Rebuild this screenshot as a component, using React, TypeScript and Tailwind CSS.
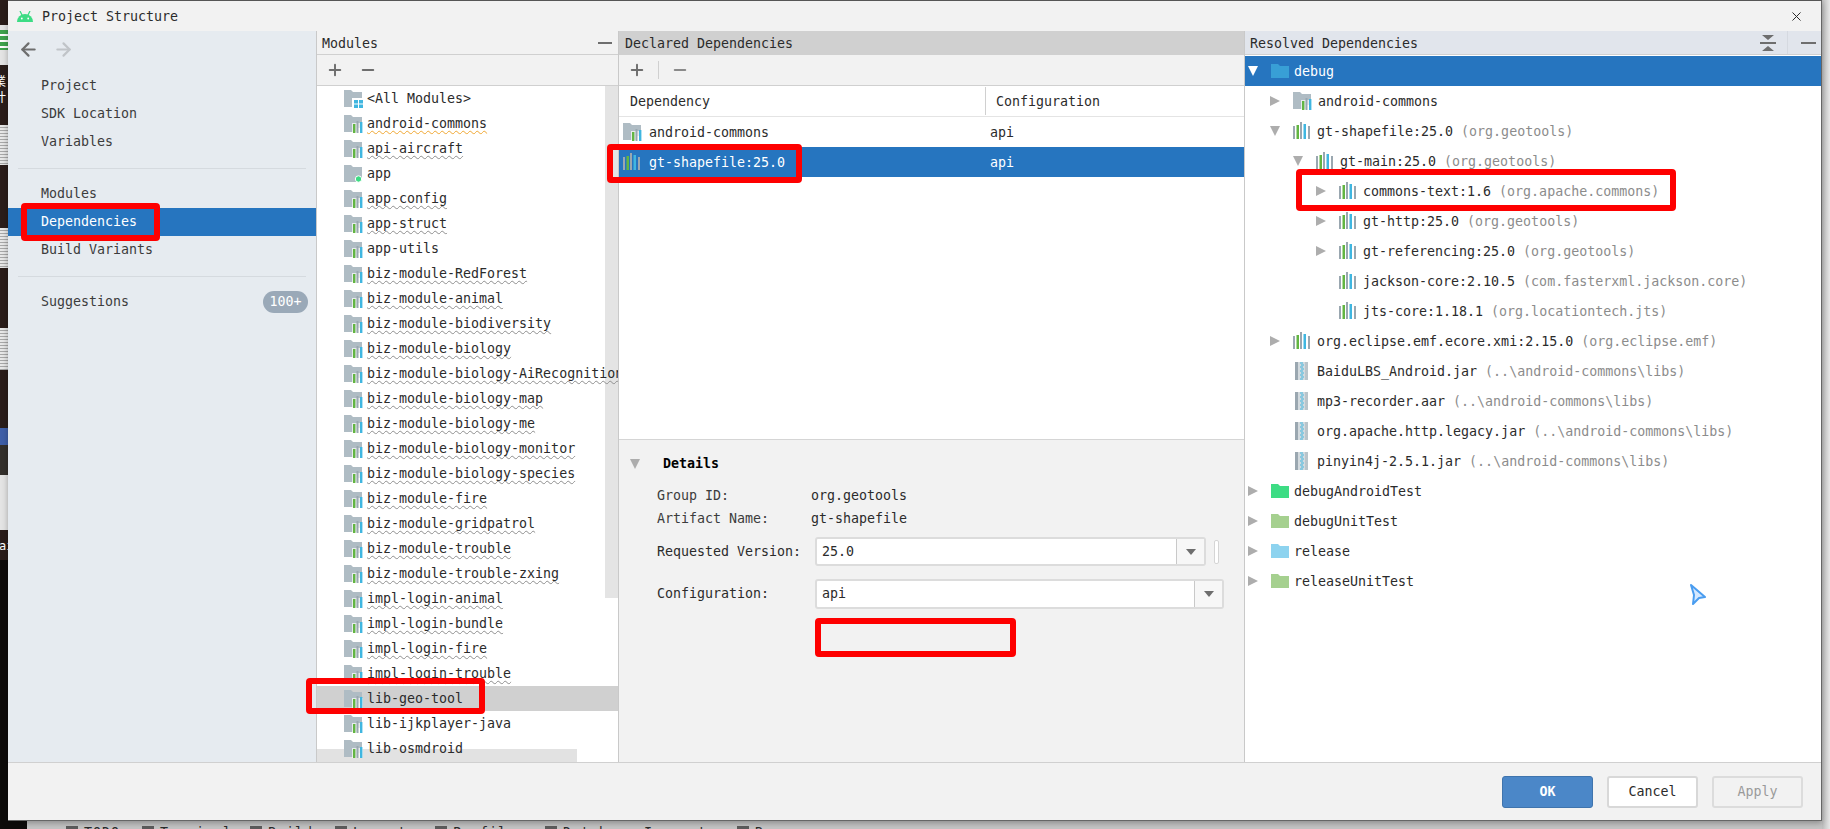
import { ArrowLeft, ArrowRight, Plus, Minus, X } from 'lucide-react';

type IconKind = 'module' | 'lib' | 'jar' | 'app' | 'all';

interface TreeRow {
  level: number;
  arrow?: 'right' | 'down';
  icon: IconKind | 'debug' | 'green' | 'lime' | 'sky';
  name: string;
  detail?: string;
  selected?: boolean;
}

const modules: { name: string; icon: IconKind; line?: 'orange' | 'gray' }[] = [
  { name: '<All Modules>', icon: 'all' },
  { name: 'android-commons', icon: 'module', line: 'orange' },
  { name: 'api-aircraft', icon: 'module', line: 'gray' },
  { name: 'app', icon: 'app' },
  { name: 'app-config', icon: 'module', line: 'gray' },
  { name: 'app-struct', icon: 'module', line: 'gray' },
  { name: 'app-utils', icon: 'module' },
  { name: 'biz-module-RedForest', icon: 'module', line: 'gray' },
  { name: 'biz-module-animal', icon: 'module', line: 'gray' },
  { name: 'biz-module-biodiversity', icon: 'module', line: 'gray' },
  { name: 'biz-module-biology', icon: 'module', line: 'gray' },
  { name: 'biz-module-biology-AiRecognition', icon: 'module', line: 'gray' },
  { name: 'biz-module-biology-map', icon: 'module', line: 'gray' },
  { name: 'biz-module-biology-me', icon: 'module', line: 'gray' },
  { name: 'biz-module-biology-monitor', icon: 'module', line: 'gray' },
  { name: 'biz-module-biology-species', icon: 'module', line: 'gray' },
  { name: 'biz-module-fire', icon: 'module', line: 'gray' },
  { name: 'biz-module-gridpatrol', icon: 'module', line: 'gray' },
  { name: 'biz-module-trouble', icon: 'module', line: 'gray' },
  { name: 'biz-module-trouble-zxing', icon: 'module', line: 'gray' },
  { name: 'impl-login-animal', icon: 'module', line: 'gray' },
  { name: 'impl-login-bundle', icon: 'module', line: 'gray' },
  { name: 'impl-login-fire', icon: 'module', line: 'gray' },
  { name: 'impl-login-trouble', icon: 'module', line: 'gray' },
  { name: 'lib-geo-tool', icon: 'module' },
  { name: 'lib-ijkplayer-java', icon: 'module' },
  { name: 'lib-osmdroid', icon: 'module' },
];

const tree: TreeRow[] = [
  { level: 0, arrow: 'down', icon: 'debug', name: 'debug', selected: true },
  { level: 1, arrow: 'right', icon: 'module', name: 'android-commons' },
  { level: 1, arrow: 'down', icon: 'lib', name: 'gt-shapefile:25.0', detail: '(org.geotools)' },
  { level: 2, arrow: 'down', icon: 'lib', name: 'gt-main:25.0', detail: '(org.geotools)' },
  { level: 3, arrow: 'right', icon: 'lib', name: 'commons-text:1.6', detail: '(org.apache.commons)' },
  { level: 3, arrow: 'right', icon: 'lib', name: 'gt-http:25.0', detail: '(org.geotools)' },
  { level: 3, arrow: 'right', icon: 'lib', name: 'gt-referencing:25.0', detail: '(org.geotools)' },
  { level: 3, icon: 'lib', name: 'jackson-core:2.10.5', detail: '(com.fasterxml.jackson.core)' },
  { level: 3, icon: 'lib', name: 'jts-core:1.18.1', detail: '(org.locationtech.jts)' },
  { level: 1, arrow: 'right', icon: 'lib', name: 'org.eclipse.emf.ecore.xmi:2.15.0', detail: '(org.eclipse.emf)' },
  { level: 1, icon: 'jar', name: 'BaiduLBS_Android.jar', detail: '(..\\android-commons\\libs)' },
  { level: 1, icon: 'jar', name: 'mp3-recorder.aar', detail: '(..\\android-commons\\libs)' },
  { level: 1, icon: 'jar', name: 'org.apache.http.legacy.jar', detail: '(..\\android-commons\\libs)' },
  { level: 1, icon: 'jar', name: 'pinyin4j-2.5.1.jar', detail: '(..\\android-commons\\libs)' },
  { level: 0, arrow: 'right', icon: 'green', name: 'debugAndroidTest' },
  { level: 0, arrow: 'right', icon: 'lime', name: 'debugUnitTest' },
  { level: 0, arrow: 'right', icon: 'sky', name: 'release' },
  { level: 0, arrow: 'right', icon: 'lime', name: 'releaseUnitTest' },
];

const levelPad = ['pl-[3px]', 'pl-[25px]', 'pl-[48px]', 'pl-[71px]'];

function Bars({ dim }: { dim?: boolean }) {
  return (
    <svg width="18" height="18" viewBox="0 0 18 18" className={dim ? 'shrink-0 opacity-80' : 'shrink-0'}>
      <rect x="0" y="4" width="2" height="13" fill="#9aa7b0" />
      <rect x="3.5" y="3" width="2.5" height="14" fill="#62b543" />
      <rect x="7" y="0" width="2" height="17" fill="#9aa7b0" />
      <rect x="10.5" y="2" width="2.5" height="15" fill="#40b6e0" />
      <rect x="15" y="4" width="2" height="13" fill="#9aa7b0" />
    </svg>
  );
}

function Folder({ color }: { color: string }) {
  return (
    <svg width="18" height="18" viewBox="0 0 18 18" className="shrink-0">
      <path d="M0 2h7l2 2h9v12H0z" fill={color} />
    </svg>
  );
}

function ModuleIcon({ kind }: { kind: IconKind }) {
  return (
    <svg width="19" height="18" viewBox="0 0 19 18" className="shrink-0">
      <path d="M0 0h7l2 2h9v11h-5v4H0z" fill="#afbcc4" />
      {kind === 'module' && (
        <>
          <rect x="8" y="8" width="11" height="10" fill="#fff" opacity="0.7" />
          <rect x="9" y="9" width="2.4" height="9" fill="#62b543" />
          <rect x="12.5" y="6" width="2" height="12" fill="#9aa7b0" />
          <rect x="16" y="7" width="2.4" height="11" fill="#40b6e0" />
        </>
      )}
      {kind === 'app' && <circle cx="14.5" cy="14" r="3.2" fill="#3ddc84" stroke="#fff" />}
      {kind === 'all' && (
        <>
          <rect x="8" y="8" width="11" height="10" fill="#fff" />
          <rect x="10" y="10" width="4" height="3.5" fill="#40b6e0" />
          <rect x="15" y="10" width="4" height="3.5" fill="#40b6e0" />
          <rect x="10" y="14.5" width="4" height="3.5" fill="#40b6e0" />
          <rect x="15" y="14.5" width="4" height="3.5" fill="#40b6e0" />
        </>
      )}
    </svg>
  );
}

function JarIcon() {
  return (
    <svg width="18" height="20" viewBox="0 0 18 20" className="shrink-0">
      <rect x="2" y="1" width="13" height="18" fill="#d3dade" />
      <rect x="2" y="1" width="3" height="18" fill="#9aa7b0" />
      <rect x="12" y="1" width="3" height="18" fill="#b9c4ca" />
      <path d="M7 2h3M8 4h3M7 6h3M8 8h3M7 10h3M8 12h3M7 14h3M8 16h3M7 18h3" stroke="#40b6e0" strokeWidth="1.2" />
    </svg>
  );
}

function Triangle({ dir, color = '#adadad' }: { dir: 'right' | 'down'; color?: string }) {
  return (
    <svg width="10" height="10" viewBox="0 0 10 10" className="shrink-0">
      <path d={dir === 'right' ? 'M0 0l10 5-10 5z' : 'M0 0h10l-5 10z'} fill={color} />
    </svg>
  );
}

function RedBox({ className }: { className: string }) {
  return <div className={`absolute z-20 border-[6px] border-[#fe0000] rounded-[4px] ${className}`} />;
}

function NavRow({ label, selected }: { label: string; selected?: boolean }) {
  return (
    <div className={`h-[28px] pl-[33px] flex items-center ${selected ? 'bg-[#2675bf] text-white' : 'text-[#3c3c3c]'}`}>
      {label}
    </div>
  );
}

function Sidebar() {
  return (
    <div className="w-[309px] shrink-0 bg-[#e6ebf0] border-r border-[#c9c9c9]">
      <div className="h-[36px] flex items-center pl-[10px] gap-[14px]">
        <ArrowLeft size={21} strokeWidth={2.5} color="#6e6e6e" />
        <ArrowRight size={21} strokeWidth={2.5} color="#c0c4c8" />
      </div>
      <div className="mt-[5px]">
        <NavRow label="Project" />
        <NavRow label="SDK Location" />
        <NavRow label="Variables" />
      </div>
      <div className="mt-[12px] mb-[11px] mx-[10px] h-px bg-[#d5dadf]" />
      <NavRow label="Modules" />
      <NavRow label="Dependencies" selected />
      <NavRow label="Build Variants" />
      <div className="mt-[12px] mb-[11px] mx-[10px] h-px bg-[#d5dadf]" />
      <div className="h-[28px] pl-[33px] pr-[8px] flex items-center justify-between text-[#3c3c3c]">
        <span>Suggestions</span>
        <span className="w-[45px] h-[22px] rounded-full bg-[#9aa9b8] text-white text-center leading-[22px]">100+</span>
      </div>
    </div>
  );
}

function ModulesPanel() {
  return (
    <div className="w-[301px] shrink-0 flex flex-col bg-white">
      <div className="h-[24px] shrink-0 bg-[#f2f2f2] border-b border-[#d0d0d0] pl-[5px] pr-[6px] flex items-center justify-between">
        <span className="pt-[2px]">Modules</span>
        <div className="w-[14px] h-[2px] bg-[#6e6e6e]" />
      </div>
      <div className="h-[31px] shrink-0 bg-[#f2f2f2] border-b border-[#d0d0d0] pl-[9px] flex items-center gap-[15px]">
        <Plus size={18} strokeWidth={2.6} color="#6e6e6e" />
        <Minus size={18} strokeWidth={2.6} color="#6e6e6e" />
      </div>
      <div className="relative flex-1 overflow-hidden">
        <div className="absolute right-0 top-0 w-[13px] h-[512px] bg-[#e4e4e4]" />
        <div className="absolute left-0 bottom-0 w-[260px] h-[13px] bg-[#e2e2e2]" />
        {modules.map((m) => (
          <div
            key={m.name}
            className={`relative h-[25px] pl-[27px] flex items-center gap-[4px] whitespace-nowrap ${
              m.name === 'lib-geo-tool' ? 'bg-[#d0d0d0]' : ''
            }`}
          >
            <ModuleIcon kind={m.icon} />
            <span
              className={
                m.line === 'orange'
                  ? 'underline decoration-wavy decoration-1 decoration-[#f0a732] underline-offset-2 [text-decoration-skip-ink:none]'
                  : m.line === 'gray'
                    ? 'underline decoration-wavy decoration-1 decoration-[#8f8f8f] underline-offset-2 [text-decoration-skip-ink:none]'
                    : ''
              }
            >
              {m.name}
            </span>
          </div>
        ))}
      </div>
    </div>
  );
}

function ComboBox({ value, className }: { value: string; className: string }) {
  return (
    <div className={`h-full flex bg-white border-2 border-[#dcdcdc] rounded-[3px] ${className}`}>
      <div className="flex-1 pl-[5px] flex items-center">{value}</div>
      <div className="w-[28px] bg-[#f7f7f7] border-l border-[#c9c9c9] flex items-center justify-center">
        <svg width="10" height="6" viewBox="0 0 10 6">
          <path d="M0 0h10L5 6z" fill="#6e6e6e" />
        </svg>
      </div>
    </div>
  );
}

function DeclaredPanel() {
  return (
    <div className="w-[626px] shrink-0 flex flex-col border-l border-[#c9c9c9] bg-white">
      <div className="h-[24px] shrink-0 bg-[#d0d0d0] pl-[6px] flex items-center">
        <span className="pt-[2px]">Declared Dependencies</span>
      </div>
      <div className="h-[31px] shrink-0 bg-[#f2f2f2] border-b border-[#d0d0d0] pl-[9px] flex items-center">
        <Plus size={18} strokeWidth={2.6} color="#6e6e6e" />
        <div className="w-px h-[18px] bg-[#d0d0d0] mx-[12px]" />
        <Minus size={18} strokeWidth={2.6} color="#8a8a8a" />
      </div>
      <div className="h-[31px] shrink-0 grid grid-cols-[367px_1fr] border-b border-[#e4e4e4]">
        <div className="pl-[11px] flex items-center border-r border-[#d0d0d0] my-[1px]">
          <span className="pt-[2px]">Dependency</span>
        </div>
        <div className="pl-[10px] flex items-center">
          <span className="pt-[2px]">Configuration</span>
        </div>
      </div>
      <div className="h-[30px] shrink-0 grid grid-cols-[367px_1fr]">
        <div className="pl-[4px] flex items-center gap-[7px]">
          <ModuleIcon kind="module" />
          <span className="pt-[2px]">android-commons</span>
        </div>
        <div className="pl-[4px] flex items-center">
          <span className="pt-[2px]">api</span>
        </div>
      </div>
      <div className="h-[30px] shrink-0 grid grid-cols-[367px_1fr] bg-[#2675bf] text-white">
        <div className="pl-[4px] flex items-center gap-[7px]">
          <Bars />
          <span className="ml-px pt-[2px]">gt-shapefile:25.0</span>
        </div>
        <div className="pl-[4px] flex items-center">
          <span className="pt-[2px]">api</span>
        </div>
      </div>
      <div className="flex-1" />
      <div className="h-[323px] shrink-0 bg-[#f2f2f2] border-t border-[#d5d5d5] pt-[14px]">
        <div className="h-[20px] pl-[11px] flex items-center">
          <Triangle dir="down" />
          <span className="ml-[23px] font-bold text-black">Details</span>
        </div>
        <div className="mt-[10px] pl-[38px]">
          <div className="h-[23px] flex items-center">
            <span className="w-[154px] text-[#3c3c3c]">Group ID:</span>
            <span>org.geotools</span>
          </div>
          <div className="h-[23px] flex items-center">
            <span className="w-[154px] text-[#3c3c3c]">Artifact Name:</span>
            <span>gt-shapefile</span>
          </div>
          <div className="mt-[7px] h-[29px] flex items-center">
            <span className="w-[158px] shrink-0">Requested Version:</span>
            <ComboBox value="25.0" className="w-[391px]" />
            <div className="ml-[8px] w-[5px] h-[24px] bg-white border border-[#d5d5d5] rounded-[2px]" />
          </div>
          <div className="mt-[13px] h-[30px] flex items-center">
            <span className="w-[158px] shrink-0">Configuration:</span>
            <ComboBox value="api" className="w-[409px]" />
          </div>
        </div>
      </div>
    </div>
  );
}

function TreeIcon({ icon }: { icon: TreeRow['icon'] }) {
  if (icon === 'lib') return <Bars />;
  if (icon === 'jar') return <JarIcon />;
  if (icon === 'module') return <ModuleIcon kind="module" />;
  if (icon === 'debug') return <Folder color="#389fd6" />;
  if (icon === 'green') return <Folder color="#3ddc84" />;
  if (icon === 'lime') return <Folder color="#a5d08f" />;
  return <Folder color="#8dd3ef" />;
}

function ResolvedPanel() {
  return (
    <div className="flex-1 flex flex-col border-l border-[#c9c9c9] bg-white">
      <div className="h-[24px] shrink-0 bg-[#e1e5ec] border-b border-[#d0d0d0] pl-[5px] flex items-center">
        <span className="flex-1 pt-[2px]">Resolved Dependencies</span>
        <svg width="16" height="18" viewBox="0 0 16 18">
          <path d="M2 1h12L8 6zM2 17h12L8 12z" fill="#6e6e6e" />
          <rect x="0" y="8" width="16" height="2" fill="#6e6e6e" />
        </svg>
        <div className="w-px h-full bg-[#d5d9e0] ml-[11px] mr-[13px]" />
        <div className="w-[15px] h-[2px] bg-[#6e6e6e] mr-[5px]" />
      </div>
      <div className="h-px shrink-0" />
      {tree.map((r) => (
        <div
          key={r.name}
          className={`h-[30px] shrink-0 flex items-center whitespace-nowrap ${levelPad[r.level]} ${
            r.selected ? 'bg-[#2675bf] text-white' : ''
          }`}
        >
          <div className="w-[10px] shrink-0">
            {r.arrow && <Triangle dir={r.arrow} color={r.selected ? '#ffffff' : '#adadad'} />}
          </div>
          <div className="ml-[13px]">
            <TreeIcon icon={r.icon} />
          </div>
          <span className={`pt-[2px] ${r.level > 0 ? 'ml-[6px]' : 'ml-[5px]'}`}>{r.name}</span>
          {r.detail && <span className="ml-[8px] pt-[2px] text-[#8c8c8c]">{r.detail}</span>}
        </div>
      ))}
    </div>
  );
}

function Footer() {
  const btn = 'h-[32px] rounded-[3px] flex items-center justify-center';
  return (
    <div className="flex-1 bg-[#f2f2f2] border-t border-[#d0d0d0] flex justify-end items-start pt-[13px] pr-[18px] gap-[14px]">
      <div className={`${btn} w-[91px] bg-[#4b87c8] border border-[#3f74ad] text-white font-bold`}>OK</div>
      <div className={`${btn} w-[91px] bg-white border-2 border-[#d8d8d8]`}>Cancel</div>
      <div className={`${btn} w-[91px] border-2 border-[#dcdcdc] text-[#9a9a9a]`}>Apply</div>
    </div>
  );
}

function LeftStrip() {
  const stripes = 'bg-[repeating-linear-gradient(#e8e8e8_0_2px,#a8a8a8_2px_3px)]';
  return (
    <div className="w-[8px] shrink-0 flex flex-col text-[12px] leading-[16px] text-white overflow-hidden bg-[#2a1d1a]">
      <div className="h-[25px] shrink-0" />
      <div className="h-[40px] shrink-0 bg-[#e4e4e4] pt-[5px]">
        <div className="h-[20px] bg-[repeating-linear-gradient(#3fa34d_0_4px,#ffffff_4px_6px)]" />
      </div>
      <div className="h-[60px] shrink-0 pt-[8px] font-['Noto_Sans_CJK_SC',sans-serif]">
        <div className="-ml-[6px]">業</div>
        <div className="-ml-[6px]">计</div>
      </div>
      <div className={`h-[40px] shrink-0 ${stripes}`} />
      <div className="h-[63px] shrink-0" />
      <div className={`h-[40px] shrink-0 ${stripes}`} />
      <div className="h-[60px] shrink-0" />
      <div className={`h-[42px] shrink-0 ${stripes}`} />
      <div className="h-[58px] shrink-0" />
      <div className="h-[17px] shrink-0 bg-[#3f5fa8]" />
      <div className="h-[30px] shrink-0 bg-[#34302c]" />
      <div className="h-[55px] shrink-0 bg-[#e4e4e4]" />
      <div className="h-[30px] shrink-0 pt-[8px] -ml-[1px]">ai</div>
      <div className="flex-1 bg-[#0d0b0a]" />
    </div>
  );
}

function StatusItem({ label, className }: { label: string; className: string }) {
  return (
    <div className={`shrink-0 flex gap-[6px] items-start ${className}`}>
      <div className="w-[12px] h-[6px] mt-[1px] bg-[#5c5c5c]" />
      <span className="text-[13.3px] leading-[16px] text-[#2b2b2b] tracking-[1px]">{label}</span>
    </div>
  );
}

export default function App() {
  return (
    <div className="relative w-[1830px] h-[829px] overflow-hidden flex bg-[#c8c8c8] font-['DejaVu_Sans_Mono','Liberation_Mono',monospace] text-[13.3px] text-[#2b2b2b]">
      <LeftStrip />
      <div className="flex-1 flex flex-col min-w-0">
        <div className="h-px shrink-0 bg-[#5c5c5c]" />
        <div className="h-[820px] shrink-0 flex flex-col bg-[#f2f2f2] border-r border-b border-[#666666] shadow-[0_2px_6px_rgba(0,0,0,0.3)] z-10">
          <div className="h-[30px] shrink-0 flex items-center pl-[9px] pr-[17px]">
            <svg width="16" height="11" viewBox="0 0 16 11" className="shrink-0">
              <path d="M0 11a8 8 0 0 1 16 0z" fill="#3ddc84" />
              <path d="M3 0l2 4M13 0l-2 4" stroke="#3ddc84" strokeWidth="1.3" />
              <circle cx="4.8" cy="7.5" r="0.9" fill="#fff" />
              <circle cx="11.2" cy="7.5" r="0.9" fill="#fff" />
            </svg>
            <span className="ml-[9px] flex-1 pt-[2px]">Project Structure</span>
            <X size={15} strokeWidth={1.6} color="#2b2b2b" />
          </div>
          <div className="h-[731px] shrink-0 flex overflow-hidden">
            <Sidebar />
            <ModulesPanel />
            <DeclaredPanel />
            <ResolvedPanel />
          </div>
          <Footer />
        </div>
        <div className="flex-1 flex overflow-hidden bg-[#c4c4c4]">
          <div className="w-[19px] shrink-0 bg-[#0d0b0a]" />
          <div className="flex pt-[4px] pl-[39px]">
            <StatusItem label="TODO" className="w-[76px]" />
            <StatusItem label="Terminal" className="w-[108px]" />
            <StatusItem label="Build" className="w-[85px]" />
            <StatusItem label="Logcat" className="w-[100px]" />
            <StatusItem label="Profiler" className="w-[110px]" />
            <StatusItem label="Database Inspector" className="w-[192px]" />
            <StatusItem label="Run" className="w-[60px]" />
          </div>
        </div>
      </div>
      <div className="w-[8px] shrink-0 bg-gradient-to-r from-[#bdbdbd] to-[#e6e6e6]" />

      <RedBox className="left-[21px] top-[203px] w-[139px] h-[38px]" />
      <RedBox className="left-[306px] top-[678px] w-[179px] h-[36px]" />
      <RedBox className="left-[607px] top-[144px] w-[195px] h-[39px]" />
      <RedBox className="left-[815px] top-[618px] w-[201px] h-[39px]" />
      <RedBox className="left-[1296px] top-[169px] w-[380px] h-[42px]" />

      <svg width="18" height="24" viewBox="0 0 18 24" className="absolute z-20 left-[1689px] top-[583px]">
        <path d="M2 2l14 12-6 1-6 6 1-9z" fill="#d4e8ff" stroke="#4a9df0" strokeWidth="2" strokeLinejoin="round" />
      </svg>
    </div>
  );
}
